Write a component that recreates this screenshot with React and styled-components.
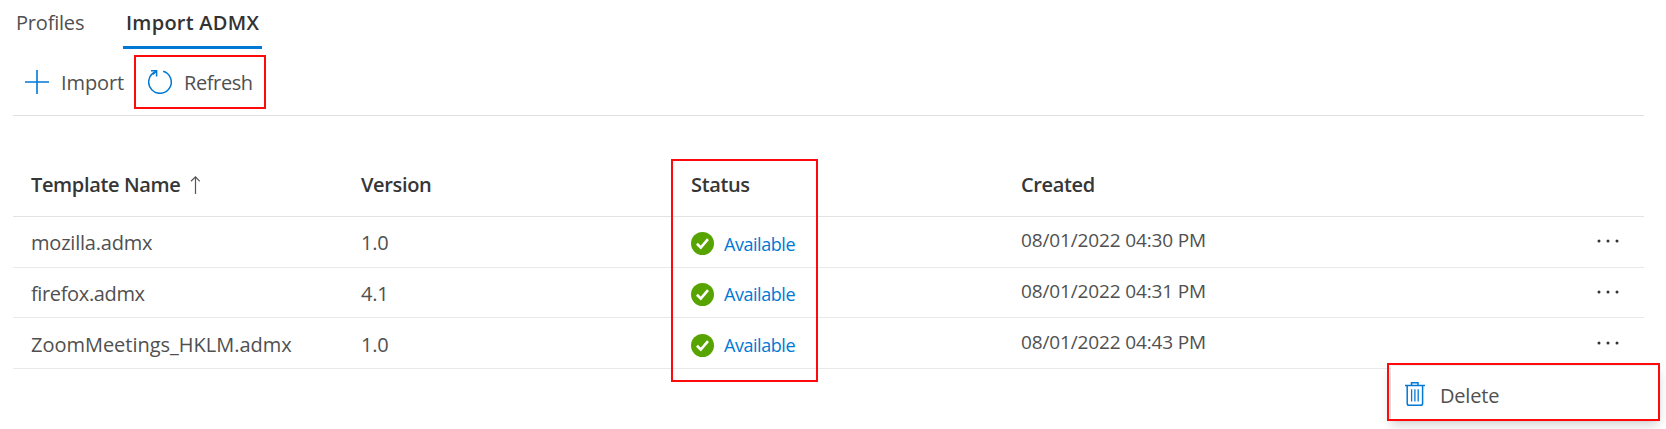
import React from "react";
import styled, { createGlobalStyle } from "styled-components";

const GlobalStyle = createGlobalStyle`
  * { box-sizing: border-box; }
  body {
    margin: 0;
    background: #fff;
    color: #4a4a4a;
    font-family: "Open Sans", "Noto Sans", sans-serif;
    font-size: 20px;
    overflow: hidden;
  }
`;

const BLUE = "#0078d4";

const Page = styled.div`
  position: relative;
  width: 1666px;
  height: 429px;
  padding-left: 13px;
`;

const Text = styled.span`
  font-size: ${(p) => p.$size || 20}px;
  font-weight: ${(p) => p.$weight || 400};
  letter-spacing: ${(p) => p.$track ?? -0.2}px;
  line-height: 24px;
  white-space: nowrap;
  color: ${(p) => p.$color || "#505050"};
`;

const Tabs = styled.div`
  display: flex;
  gap: 36px;
  height: 49px;
`;

const Tab = styled.div`
  width: ${(p) => p.$width}px;
  padding: 9px 0 0 3px;
  border-bottom: 3px solid ${(p) => (p.$active ? BLUE : "transparent")};
`;

const Toolbar = styled.div`
  display: flex;
  align-items: flex-start;
  width: 1631px;
  height: 67px;
  padding: 6px 0 0 3px;
  border-bottom: 1px solid #dfdfdf;
`;

const ToolButton = styled.div`
  display: flex;
  gap: 12px;
  width: ${(p) => p.$width}px;
  height: 54px;
  padding: ${(p) => (p.$marked ? 13 : 15)}px 0 0 ${(p) => p.$inset}px;
  border: ${(p) => (p.$marked ? "2px solid #ff0a0a" : "0")};

  ${Text} {
    padding-top: 1px;
  }
`;

const Icon = styled.svg`
  display: block;
  flex: none;
  fill: none;
`;

const Table = styled.div`
  position: relative;
  width: 1631px;
  padding-top: 42px;
`;

const Row = styled.div`
  display: grid;
  grid-template-columns: 330px 330px 330px 1fr 47px;
  align-items: start;
  height: ${(p) => p.$height}px;
  padding: ${(p) => p.$top}px 0 0 18px;
  border-bottom: 1px solid ${(p) => (p.$head ? "#e3e3e3" : "#e9e9e9")};
`;

const Cell = styled.div`
  display: flex;
  align-items: ${(p) => (p.$sorted ? "center" : "flex-start")};
  gap: 10px;
  padding-top: ${(p) => p.$drop || 0}px;
`;

const StatusLabel = styled.div`
  display: flex;
  margin-top: ${(p) => p.$shift}px;
`;

const ColumnMark = styled.div`
  position: absolute;
  left: 658px;
  top: 43px;
  width: 147px;
  height: 223px;
  border: 2px solid #ff0a0a;
`;

const Menu = styled.div`
  position: absolute;
  left: 1391px;
  top: 366px;
  width: 267px;
  height: 53px;
  background: #fff;
  box-shadow: 0 5px 11px rgba(0, 0, 0, 0.2), 0 1px 3px rgba(0, 0, 0, 0.14);
`;

const MenuItem = styled.div`
  position: absolute;
  left: 1387px;
  top: 363px;
  display: flex;
  gap: 15px;
  width: 273px;
  height: 58px;
  padding: 17px 0 0 16px;
  border: 2px solid #ff0a0a;

  ${Text} {
    padding-top: 2px;
  }
`;

const PlusIcon = () => (
  <Icon width="24" height="24" viewBox="0 0 24 24" stroke={BLUE} strokeWidth="1.6">
    <path d="M12 0v24M0 12h24" />
  </Icon>
);

const RefreshIcon = () => (
  <Icon width="24" height="24" viewBox="0 0 24 24" stroke={BLUE} strokeWidth="1.5">
    <path d="M15.2 1.2A11.3 11.3 0 1 1 6.6 2.1L8.4 1" />
    <path d="M3 0.8H8.6V6.4M8.4 1L4.9 4.5" />
  </Icon>
);

const SortIcon = () => (
  <Icon width="10" height="18" viewBox="0 0 10 18" stroke="#555" strokeWidth="1.2">
    <path d="M5.5 18V1M1 5.3L5.5 .9L9.8 5.3" />
  </Icon>
);

const CheckIcon = () => (
  <Icon width="23" height="23" viewBox="0 0 23 23">
    <circle cx="11.5" cy="11.5" r="11.5" fill="#57a300" />
    <path d="M5.9 11.7L9.8 15.5L17 7.2" stroke="#fff" strokeWidth="2.6" />
  </Icon>
);

const DotsIcon = () => (
  <Icon width="22" height="4" viewBox="0 0 22 4">
    <g fill="#333">
      <circle cx="2" cy="2" r="1.5" />
      <circle cx="11" cy="2" r="1.5" />
      <circle cx="20" cy="2" r="1.5" />
    </g>
  </Icon>
);

const TrashIcon = () => (
  <Icon width="20" height="24" viewBox="0 0 20 24" stroke={BLUE} strokeWidth="1.5">
    <path d="M0 3.6H20M6.5 3.5V.8H13V3.5M2.2 3.6V21.4Q2.2 23.2 4 23.2H15.8Q17.6 23.2 17.6 21.4V3.6" />
    <path d="M6.6 7.3V19.6M9.9 7.3V19.6M13.2 7.3V19.6" strokeWidth="1.3" />
  </Icon>
);

const HEADERS = ["Template Name", "Version", "Status", "Created"];

const ROWS = [
  { name: "mozilla.admx", track: -0.2, version: "1.0", created: "08/01/2022 04:30 PM", height: 51, top: 11, shift: 0 },
  { name: "firefox.admx", track: -0.36, version: "4.1", created: "08/01/2022 04:31 PM", height: 50, top: 11, shift: -1 },
  { name: "ZoomMeetings_HKLM.admx", track: -0.02, version: "1.0", created: "08/01/2022 04:43 PM", height: 51, top: 12, shift: -1 },
];

export default function App() {
  return (
    <Page>
      <GlobalStyle />
      <Tabs>
        <Tab $width={74}>
          <Text>Profiles</Text>
        </Tab>
        <Tab $width={139} $active>
          <Text $weight={600} $color="#333" $track={0.25}>Import ADMX</Text>
        </Tab>
      </Tabs>
      <Toolbar>
        <ToolButton $width={118} $inset={9}>
          <PlusIcon />
          <Text $track={-0.1}>Import</Text>
        </ToolButton>
        <ToolButton $width={132} $inset={12} $marked>
          <RefreshIcon />
          <Text $track={-0.4}>Refresh</Text>
        </ToolButton>
      </Toolbar>
      <Table>
        <Row $head $height={59} $top={15}>
          {HEADERS.map((label, i) => (
            <Cell key={label} $sorted={i === 0}>
              <Text $weight={600} $color="#363636" $track={-0.35}>{label}</Text>
              {i === 0 && <SortIcon />}
            </Cell>
          ))}
        </Row>
        {ROWS.map((r) => (
          <Row key={r.name} $height={r.height} $top={r.top}>
            <Cell $drop={3}><Text $track={r.track}>{r.name}</Text></Cell>
            <Cell $drop={3}><Text>{r.version}</Text></Cell>
            <Cell $drop={4}>
              <CheckIcon />
              <StatusLabel $shift={r.shift}>
                <Text $size={18} $color={BLUE} $track={-0.45}>Available</Text>
              </StatusLabel>
            </Cell>
            <Cell><Text $size={19} $track={-0.14}>{r.created}</Text></Cell>
            <Cell $drop={11}><DotsIcon /></Cell>
          </Row>
        ))}
        <ColumnMark />
      </Table>
      <Menu />
      <MenuItem>
        <TrashIcon />
        <Text>Delete</Text>
      </MenuItem>
    </Page>
  );
}
